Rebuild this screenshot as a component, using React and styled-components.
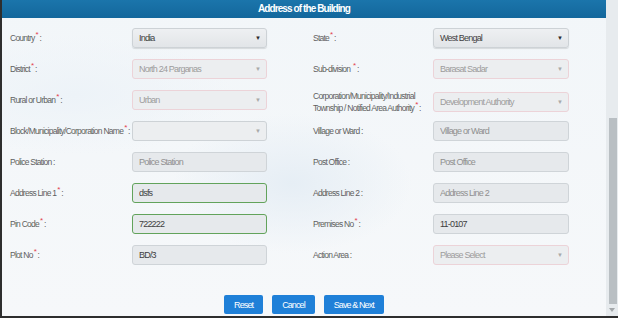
import styled, { createGlobalStyle } from "styled-components";

const GlobalStyle = createGlobalStyle`
  body {
    margin: 0;
    background: #ffffff;
    font-family: "Liberation Sans", Arial, sans-serif;
  }
`;

const Frame = styled.div`
  display: flex;
  width: 618px;
  height: 318px;
  box-sizing: border-box;
  border-left: 2px solid #2e2e2e;
  border-bottom: 2px solid #2e2e2e;
`;

const Main = styled.div`
  flex: 1;
  display: flex;
  flex-direction: column;
  background: radial-gradient(ellipse 120px 70px at 48% 58%, #e6eef5 0%, rgba(230, 238, 245, 0) 100%),
    radial-gradient(ellipse 160px 60px at 12% 30%, #edf3f8 0%, rgba(237, 243, 248, 0) 100%),
    linear-gradient(180deg, #f2f6f9 0%, #f6f8fa 100%);
`;

const Header = styled.div`
  height: 18px;
  line-height: 18px;
  background: linear-gradient(180deg, #1b75ab 0%, #13679c 100%);
  color: #ffffff;
  font-size: 10px;
  font-weight: bold;
  letter-spacing: -0.9px;
  text-align: center;
`;

const Form = styled.div`
  display: flex;
  flex-direction: column;
  gap: 11px;
  padding: 10px 0 0 8px;
`;

const Row = styled.div`
  display: flex;
  gap: 46px;
`;

const Field = styled.div`
  display: grid;
  grid-template-columns: ${(p) => p.$labelWidth}px ${(p) => p.$boxWidth}px;
  align-items: center;
  height: 20px;
`;

const Label = styled.div`
  font-size: 8.5px;
  line-height: 12px;
  letter-spacing: -0.75px;
  color: #5f5f5f;
  white-space: nowrap;
`;

const Star = styled.sup`
  color: #e2404f;
  font-size: 8px;
  line-height: 0;
  margin-left: 1px;
`;

const SelectBox = styled.div`
  display: flex;
  align-items: center;
  justify-content: space-between;
  height: 20px;
  box-sizing: border-box;
  padding: 0 5px 0 6px;
  border: 1px solid ${(p) => (p.$pink ? "#ecd3d8" : "#cdd2d6")};
  border-radius: 3px;
  background: ${(p) =>
    p.$disabled
      ? "#eceef0"
      : "linear-gradient(180deg, #eef0f2 0%, #e2e5e8 100%)"};
  box-shadow: ${(p) => (p.$disabled ? "none" : "0 1px 1px rgba(0,0,0,0.12)")};
  font-size: 9px;
  letter-spacing: -0.8px;
  color: ${(p) => (p.$disabled ? "#9c9c9c" : "#3f3f3f")};
`;

const Caret = styled.span`
  font-size: 6px;
  letter-spacing: 0;
  color: ${(p) => (p.$disabled ? "#a9a9a9" : "#2c2c2c")};
`;

const TextBox = styled.input`
  height: 20px;
  width: 100%;
  box-sizing: border-box;
  margin: 0;
  padding: 0 6px;
  border: 1px solid ${(p) => (p.$valid ? "#62a35b" : "#cfd4d8")};
  border-radius: 3px;
  background: #e6e9ec;
  font-family: "Liberation Sans", Arial, sans-serif;
  font-size: 9px;
  letter-spacing: -0.8px;
  color: #3f3f3f;
  outline: none;

  &::placeholder {
    color: #8f8f8f;
  }
`;

const Actions = styled.div`
  display: flex;
  justify-content: center;
  gap: 9px;
  margin-top: 30px;
`;

const Button = styled.button`
  height: 19px;
  padding: 0 10px;
  border: none;
  border-radius: 2px;
  background: #1f80d8;
  color: #ffffff;
  font-family: "Liberation Sans", Arial, sans-serif;
  font-size: 9px;
  letter-spacing: -0.9px;
  cursor: pointer;
`;

const Scrollbar = styled.div`
  width: 12px;
  display: flex;
  flex-direction: column;
  align-items: center;
  background: #e7ebee;
  padding-top: 118px;
  box-sizing: border-box;
`;

const Thumb = styled.div`
  width: 8px;
  height: 186px;
  margin-left: 1px;
  background: #b9bfc3;
`;

const ArrowDown = styled.div`
  margin-top: 4px;
  width: 0;
  height: 0;
  border-left: 3px solid transparent;
  border-right: 3px solid transparent;
  border-top: 4px solid #a3a7aa;
`;

const rows = [
  [
    { label: ["Country"], req: true, kind: "select", value: "India" },
    { label: ["State"], req: true, kind: "select", value: "West Bengal" },
  ],
  [
    { label: ["District"], req: true, kind: "select", value: "North 24 Parganas", disabled: true, pink: true },
    { label: ["Sub-division "], req: true, kind: "select", value: "Barasat Sadar", disabled: true, pink: true },
  ],
  [
    { label: ["Rural or Urban"], req: true, kind: "select", value: "Urban", disabled: true, pink: true },
    {
      label: ["Corporation/Municipality/Industrial", "Township / Notified Area Authority"],
      req: true,
      kind: "select",
      value: "Development Authority",
      disabled: true,
      pink: true,
    },
  ],
  [
    { label: ["Block/Municipality/Corporation Name"], req: true, kind: "select", value: "", disabled: true },
    { label: ["Village or Ward "], kind: "input", placeholder: "Village or Ward" },
  ],
  [
    { label: ["Police Station "], kind: "input", placeholder: "Police Station" },
    { label: ["Post Office "], kind: "input", placeholder: "Post Office" },
  ],
  [
    { label: ["Address Line 1"], req: true, kind: "input", value: "dsfs", valid: true },
    { label: ["Address Line 2 "], kind: "input", placeholder: "Address Line 2" },
  ],
  [
    { label: ["Pin Code"], req: true, kind: "input", value: "722222", valid: true },
    { label: ["Premises No"], req: true, kind: "input", value: "11-0107" },
  ],
  [
    { label: ["Plot No"], req: true, kind: "input", value: "BD/3" },
    { label: ["Action Area "], kind: "select", value: "Please Select", disabled: true, pink: true },
  ],
];

const FormField = ({ f, labelWidth, boxWidth }) => {
  const last = f.label.length - 1;
  return (
    <Field $labelWidth={labelWidth} $boxWidth={boxWidth}>
      <Label>
        {f.label.map((line, i) => (
          <div key={i}>
            {line}
            {i === last && (
              <>
                {f.req && <Star>*</Star>} :
              </>
            )}
          </div>
        ))}
      </Label>
      {f.kind === "select" ? (
        <SelectBox $disabled={f.disabled} $pink={f.pink}>
          <span>{f.value}</span>
          <Caret $disabled={f.disabled}>▼</Caret>
        </SelectBox>
      ) : (
        <TextBox
          type="text"
          $valid={f.valid}
          placeholder={f.placeholder}
          defaultValue={f.value}
        />
      )}
    </Field>
  );
};

export default function App() {
  return (
    <>
      <GlobalStyle />
      <Frame>
        <Main>
          <Header>Address of the Building</Header>
          <Form>
            {rows.map(([left, right], i) => (
              <Row key={i}>
                <FormField f={left} labelWidth={122} boxWidth={135} />
                <FormField f={right} labelWidth={120} boxWidth={136} />
              </Row>
            ))}
          </Form>
          <Actions>
            <Button>Reset</Button>
            <Button>Cancel</Button>
            <Button>Save &amp; Next</Button>
          </Actions>
        </Main>
        <Scrollbar>
          <Thumb />
          <ArrowDown />
        </Scrollbar>
      </Frame>
    </>
  );
}
